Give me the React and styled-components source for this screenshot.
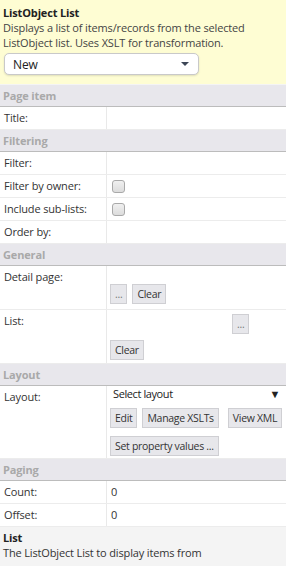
import React from 'react';
import styled, { createGlobalStyle } from 'styled-components';

const GlobalStyle = createGlobalStyle`
  body {
    margin: 0;
    background: #ffffff;
    font-family: 'Open Sans', 'Noto Sans', sans-serif;
    font-size: 11px;
    letter-spacing: -0.15px;
    color: #333333;
  }
`;

const Panel = styled.div`
  width: 286px;
  min-height: 566px;
  display: flex;
  flex-direction: column;
  background: #f4f4f4;
`;

const Intro = styled.div`
  background: #fefdd3;
  padding: 5px 3px 9px 3px;
  line-height: 15px;
`;

const IntroTitle = styled.div`
  font-weight: 700;
  color: #222222;
`;

const IntroText = styled.div`
  color: #444444;
`;

const Select = styled.div`
  margin: 3px 0 0 1px;
  width: 195px;
  height: 22px;
  box-sizing: border-box;
  border: 1px solid #c9c9c9;
  border-radius: 5px;
  background: #ffffff;
  box-shadow: 0 1px 2px rgba(0, 0, 0, 0.12);
  display: flex;
  align-items: center;
  justify-content: space-between;
  padding: 0 9px 0 8px;
  font-size: 12px;
  color: #222222;
`;

const Caret = styled.span`
  width: 0;
  height: 0;
  border-left: 4px solid transparent;
  border-right: 4px solid transparent;
  border-top: 4px solid #3d4656;
`;

const SectionHeader = styled.div`
  height: 21px;
  line-height: 21px;
  background: #e8e7ec;
  border-bottom: 1px solid #bcbcbc;
  color: #a9a9a9;
  font-weight: 700;
  padding-left: 3px;
  margin-top: ${(p) => (p.$first ? '1px' : '0')};
`;

const Row = styled.div`
  display: grid;
  grid-template-columns: 107px 1fr;
  background: #ffffff;
  border-bottom: 1px solid #ececec;
  min-height: 22px;
`;

const Label = styled.div`
  border-right: 1px solid #e9e9e9;
  padding: 4px 4px;
  line-height: 14px;
  color: #333333;
`;

const Value = styled.div`
  padding: ${(p) => p.$pad || '4px 4px'};
  line-height: 14px;
  display: flex;
  flex-direction: ${(p) => (p.$column ? 'column' : 'row')};
  align-items: flex-start;
  gap: ${(p) => p.$rowGap || '6px'} 5px;
`;

const ButtonRow = styled.div`
  display: flex;
  gap: 5px;
  white-space: nowrap;
`;

const Checkbox = styled.span`
  width: 11px;
  height: 11px;
  margin: 1px 0 0 1px;
  border: 1px solid #a9a9a9;
  border-radius: 3px;
  background: linear-gradient(#f0f0f0, #dcdcdc);
`;

const Button = styled.span`
  display: inline-flex;
  align-items: center;
  height: 20px;
  box-sizing: border-box;
  padding: 0 4px;
  border: 1px solid #cfcfd3;
  background: #e7e7eb;
  font-size: 10.5px;
  letter-spacing: -0.3px;
  white-space: nowrap;
  color: ${(p) => (p.$dim ? '#777777' : '#333333')};
  margin-left: ${(p) => p.$offset || '0'};
`;

const LayoutLine = styled.div`
  align-self: stretch;
  display: flex;
  justify-content: space-between;
  padding: 0 3px 0 3px;
  margin-bottom: -1px;
  color: #222222;
  letter-spacing: -0.4px;
`;

const Footer = styled.div`
  flex: 1;
  background: #f4f4f4;
  padding: 3px 3px;
  line-height: 15px;
`;

const FooterTitle = styled.div`
  font-weight: 700;
  color: #222222;
`;

const App = () => {
  return (
    <>
      <GlobalStyle />
      <Panel>
        <Intro>
          <IntroTitle>ListObject List</IntroTitle>
          <IntroText>Displays a list of items/records from the selected ListObject list. Uses XSLT for transformation.</IntroText>
          <Select>
            New
            <Caret />
          </Select>
        </Intro>

        <SectionHeader $first>Page item</SectionHeader>
        <Row>
          <Label>Title:</Label>
          <Value />
        </Row>

        <SectionHeader>Filtering</SectionHeader>
        <Row>
          <Label>Filter:</Label>
          <Value />
        </Row>
        <Row>
          <Label>Filter by owner:</Label>
          <Value><Checkbox /></Value>
        </Row>
        <Row>
          <Label>Include sub-lists:</Label>
          <Value><Checkbox /></Value>
        </Row>
        <Row>
          <Label>Order by:</Label>
          <Value />
        </Row>

        <SectionHeader>General</SectionHeader>
        <Row>
          <Label>Detail page:</Label>
          <Value $pad="18px 3px 5px 3px">
            <Button $dim>...</Button>
            <Button>Clear</Button>
          </Value>
        </Row>
        <Row>
          <Label>List:</Label>
          <Value $column $pad="4px 3px 3px 3px">
            <Button $dim $offset="122px">...</Button>
            <Button>Clear</Button>
          </Value>
        </Row>

        <SectionHeader>Layout</SectionHeader>
        <Row>
          <Label>Layout:</Label>
          <Value $column $pad="1px 3px 2px 3px" $rowGap="8px">
            <LayoutLine>
              <span>Select layout</span>
              <span>▼</span>
            </LayoutLine>
            <ButtonRow>
              <Button>Edit</Button>
              <Button>Manage XSLTs</Button>
              <Button $offset="4px">View XML</Button>
            </ButtonRow>
            <Button>Set property values ...</Button>
          </Value>
        </Row>

        <SectionHeader>Paging</SectionHeader>
        <Row>
          <Label>Count:</Label>
          <Value>0</Value>
        </Row>
        <Row>
          <Label>Offset:</Label>
          <Value>0</Value>
        </Row>

        <Footer>
          <FooterTitle>List</FooterTitle>
          <div>The ListObject List to display items from</div>
        </Footer>
      </Panel>
    </>
  );
};

export default App;
